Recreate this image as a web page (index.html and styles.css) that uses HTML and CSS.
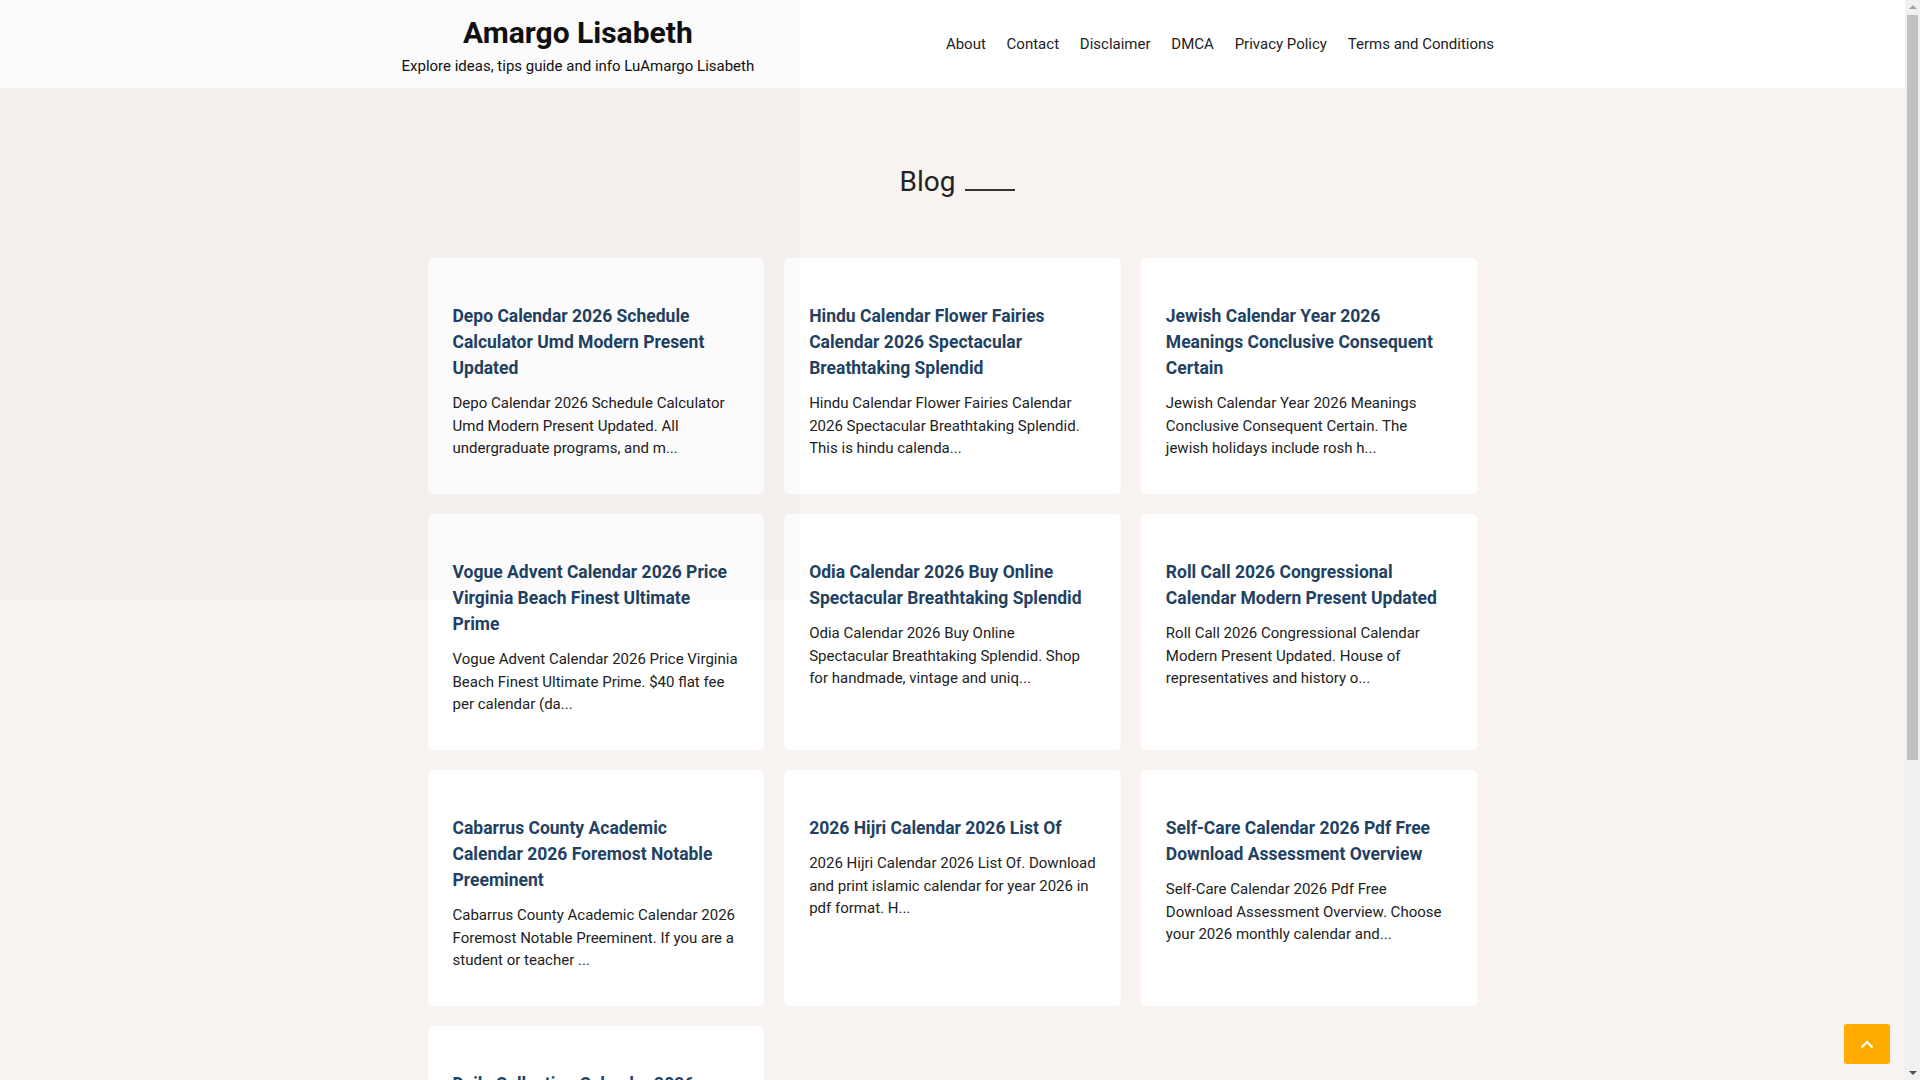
FILE: index.html
```html
<!DOCTYPE html>
<html lang="en">
<head>
<meta charset="utf-8">
<title>Blog - Amargo Lisabeth</title>
<link rel="stylesheet" href="styles.css">
</head>
<body>
<div class="page">
  <div class="shade"></div>
  <header class="site-header">
    <div class="header-inner">
      <div class="brand">
        <a class="site-title" href="#">Amargo Lisabeth</a>
        <p class="tagline">Explore ideas, tips guide and info LuAmargo Lisabeth</p>
      </div>
      <nav class="main-nav">
        <a href="#">About</a>
        <a href="#">Contact</a>
        <a href="#">Disclaimer</a>
        <a href="#">DMCA</a>
        <a href="#">Privacy Policy</a>
        <a href="#">Terms and Conditions</a>
      </nav>
    </div>
  </header>
  <main class="content">
    <h1 class="page-title">Blog</h1>
    <div class="grid">
      <article class="card">
        <h2 class="card-title"><a href="#">Depo Calendar 2026 Schedule Calculator Umd Modern Present Updated</a></h2>
        <p class="excerpt">Depo Calendar 2026 Schedule Calculator Umd Modern Present Updated. All undergraduate programs, and m...</p>
      </article>
      <article class="card">
        <h2 class="card-title"><a href="#">Hindu Calendar Flower Fairies Calendar 2026 Spectacular Breathtaking Splendid</a></h2>
        <p class="excerpt">Hindu Calendar Flower Fairies Calendar 2026 Spectacular Breathtaking Splendid. This is hindu calenda...</p>
      </article>
      <article class="card">
        <h2 class="card-title"><a href="#">Jewish Calendar Year 2026 Meanings Conclusive Consequent Certain</a></h2>
        <p class="excerpt">Jewish Calendar Year 2026 Meanings Conclusive Consequent Certain. The jewish holidays include rosh h...</p>
      </article>
      <article class="card">
        <h2 class="card-title"><a href="#">Vogue Advent Calendar 2026 Price Virginia Beach Finest Ultimate Prime</a></h2>
        <p class="excerpt">Vogue Advent Calendar 2026 Price Virginia Beach Finest Ultimate Prime. $40 flat fee per calendar (da...</p>
      </article>
      <article class="card">
        <h2 class="card-title"><a href="#">Odia Calendar 2026 Buy Online Spectacular Breathtaking Splendid</a></h2>
        <p class="excerpt">Odia Calendar 2026 Buy Online Spectacular Breathtaking Splendid. Shop for handmade, vintage and uniq...</p>
      </article>
      <article class="card">
        <h2 class="card-title"><a href="#">Roll Call 2026 Congressional Calendar Modern Present Updated</a></h2>
        <p class="excerpt">Roll Call 2026 Congressional Calendar Modern Present Updated. House of representatives and history o...</p>
      </article>
      <article class="card">
        <h2 class="card-title"><a href="#">Cabarrus County Academic Calendar 2026 Foremost Notable Preeminent</a></h2>
        <p class="excerpt">Cabarrus County Academic Calendar 2026 Foremost Notable Preeminent. If you are a student or teacher ...</p>
      </article>
      <article class="card">
        <h2 class="card-title"><a href="#">2026 Hijri Calendar 2026 List Of</a></h2>
        <p class="excerpt">2026 Hijri Calendar 2026 List Of. Download and print islamic calendar for year 2026 in pdf format. H...</p>
      </article>
      <article class="card">
        <h2 class="card-title"><a href="#">Self-Care Calendar 2026 Pdf Free Download Assessment Overview</a></h2>
        <p class="excerpt">Self-Care Calendar 2026 Pdf Free Download Assessment Overview. Choose your 2026 monthly calendar and...</p>
      </article>
      <article class="card">
        <h2 class="card-title"><a href="#">Daily Collection Calendar 2026 Modern Present Updated</a></h2>
        <p class="excerpt">Daily Collection Calendar 2026 Modern Present Updated. Free printable daily collection calendar...</p>
      </article>
    </div>
  </main>
</div>
<a class="to-top" href="#" aria-label="Back to top">
  <svg width="14" height="9" viewBox="0 0 14 9" aria-hidden="true"><path d="M1.5 7.5 L7 2 L12.5 7.5" fill="none" stroke="#fff" stroke-width="2"/></svg>
</a>
<div class="scrollbar" aria-hidden="true">
  <span class="sb-arrow sb-up"></span>
  <span class="sb-thumb"></span>
  <span class="sb-arrow sb-down"></span>
</div>
</body>
</html>
```
FILE: styles.css
```css
* { box-sizing: border-box; }
html, body { margin: 0; padding: 0; }
body {
  background: #f8f3f0;
  font-family: Roboto, "Liberation Sans", Arial, sans-serif;
  color: #222;
}
a { text-decoration: none; color: inherit; }

.page {
  margin-right: 15px;
  position: relative;
}

.shade {
  position: absolute;
  left: 0;
  top: 0;
  width: 800px;
  height: 600px;
  background: rgba(0, 0, 0, 0.015);
  pointer-events: none;
  z-index: 10;
}

.site-header {
  background: #fff;
  height: 88px;
}
.header-inner {
  max-width: 1140px;
  margin: 0 auto;
  padding: 0 15px;
  height: 100%;
  display: flex;
  align-items: center;
  justify-content: space-between;
}
.brand {
  display: flex;
  flex-direction: column;
  align-items: center;
  padding-left: 4px;
  padding-top: 2px;
}
.site-title {
  font-size: 30px;
  font-weight: 700;
  color: #111;
  line-height: 36px;
}
.tagline {
  margin: 5px 0 0;
  font-size: 15px;
  line-height: 20px;
  color: #111;
}
.main-nav {
  display: flex;
  margin-right: 3px;
}
.main-nav a {
  font-size: 15px;
  color: #222;
  padding: 0 10.4px;
  line-height: 20px;
}

.content {
  max-width: 1080px;
  margin: 0 auto;
  padding: 0 15px 40px;
}
.page-title {
  margin: 0;
  padding: 76px 0 0 10px;
  height: 170px;
  text-align: center;
  font-size: 28px;
  font-weight: 400;
  line-height: 36px;
  color: #222;
}
.page-title::after {
  content: "";
  display: inline-block;
  width: 50px;
  margin-left: 10px;
  border-bottom: 2px solid #333;
  vertical-align: baseline;
  position: relative;
  top: 0;
}

.grid {
  display: grid;
  grid-template-columns: repeat(3, 1fr);
  gap: 20px;
}
.card {
  background: #fff;
  border-radius: 5px;
  padding: 45px 25px 33px;
  min-height: 236px;
}
.card-title {
  margin: 0;
  font-size: 17.5px;
  font-weight: 700;
  line-height: 26px;
  color: #1f4262;
}
.excerpt {
  margin: 11px 0 0;
  font-size: 15px;
  line-height: 22.6px;
  color: #222;
}

.to-top {
  position: fixed;
  right: 30px;
  bottom: 16px;
  width: 46px;
  height: 40px;
  background: #ffab00;
  border-radius: 3px;
  display: flex;
  align-items: center;
  justify-content: center;
  z-index: 20;
}

.scrollbar {
  position: fixed;
  top: 0;
  right: 0;
  width: 15px;
  height: 100vh;
  background: #f1f1f1;
  z-index: 30;
  display: flex;
  flex-direction: column;
  align-items: center;
}
.sb-arrow {
  display: block;
  width: 0;
  height: 0;
  border-left: 4px solid transparent;
  border-right: 4px solid transparent;
}
.sb-up {
  margin-top: 5px;
  border-bottom: 4px solid #a3a3a3;
}
.sb-thumb {
  display: block;
  width: 11px;
  height: 745px;
  margin-top: 6px;
  background: #c1c1c1;
}
.sb-down {
  margin-top: auto;
  margin-bottom: 5px;
  border-top: 4px solid #505050;
}
```
